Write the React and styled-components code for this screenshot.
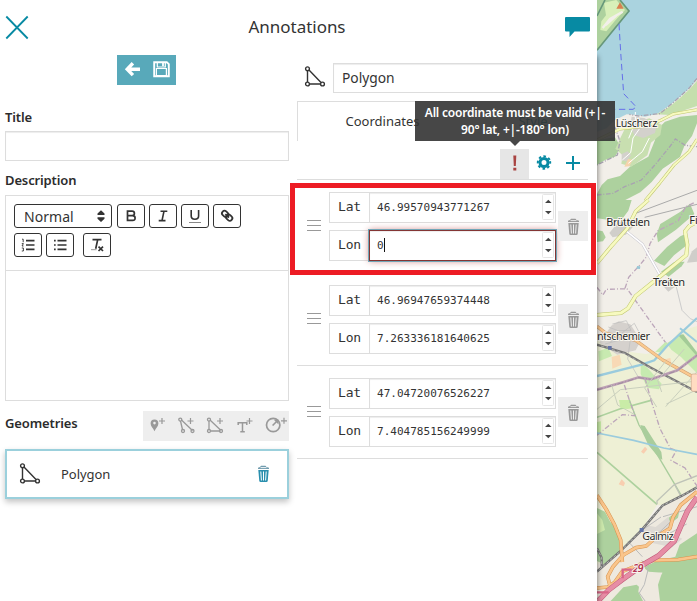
import React from 'react';
import styled, { createGlobalStyle, css } from 'styled-components';

const GlobalStyle = createGlobalStyle`
  *, *::before, *::after { box-sizing: border-box; }
  body { margin: 0; overflow: hidden; background: #fff; color: #333; font-family: "Noto Sans", sans-serif; font-size: 13px; }
  svg { display: block; }
`;

const Page = styled.div`
  display: grid;
  grid-template-columns: 597px 100px;
  width: 697px;
  height: 601px;
  overflow: hidden;
`;
const Panel = styled.main`
  position: relative;
  z-index: 1;
  background: #fff;
  box-shadow: 1px 56px 5px rgba(0, 0, 0, 0.42);
`;
const Header = styled.header`
  display: flex;
  justify-content: space-between;
  height: 55px;
  padding: 15px 6px 0 5px;
`;
const Heading = styled.h1`
  margin: 0;
  font-size: 17px;
  font-weight: 400;
  line-height: 24px;
  letter-spacing: -0.03px;
`;
const Columns = styled.div`
  display: grid;
  grid-template-columns: 284px 291px;
  gap: 8px;
  padding-left: 5px;
`;
const Column = styled.section`
  min-width: 0;
`;
const ActionBar = styled.div`
  display: flex;
  width: 59px;
  height: 30px;
  margin: 0 auto 22px 112px;
  background: #58a9ba;
`;
const FieldLabel = styled.label`
  display: block;
  height: ${(p) => p.$height}px;
  padding-top: ${(p) => p.$offset || 0}px;
  font-size: 13px;
  font-weight: 600;
  line-height: 20px;
  letter-spacing: -0.13px;
  color: #2c2c2c;
`;
const inputBox = css`
  border: 1px solid #ddd;
  box-shadow: inset 0 1px 1px rgba(0, 0, 0, 0.075);
  background: #fff;
`;
const TextBox = styled.div`
  ${inputBox}
  flex: 1;
  height: 30px;
  padding-left: 8px;
  font-size: 13.8px;
  line-height: 28px;
`;
const Editor = styled.div`
  height: 206px;
  border: 1px solid #ddd;
`;
const EditorTools = styled.div`
  display: grid;
  align-content: start;
  gap: 5px;
  height: 75px;
  padding: 8px;
  border-bottom: 1px solid #ddd;
`;
const ToolRow = styled.div`
  display: flex;
  gap: 4px;
`;
const EditorButton = styled.button`
  width: 28px;
  height: 24px;
  padding: 0;
  margin: 0 0 0 ${(p) => (p.$spaced ? 5 : 0)}px;
  border: 1px solid #333;
  border-radius: 3px;
  background: #fff;
  color: #333;
`;
const FormatSelect = styled.div`
  display: flex;
  justify-content: space-between;
  width: 98px;
  height: 24px;
  margin-right: 1px;
  padding: 0 5px 0 9px;
  border: 1px solid #333;
  border-radius: 3px;
  font-size: 14px;
  letter-spacing: 0.05px;
  line-height: 24px;
`;
const GeometryHead = styled.div`
  display: flex;
  justify-content: space-between;
  margin-top: 10px;
`;
const GeometryTools = styled.div`
  display: flex;
  width: 146px;
  height: 30px;
  background: #eee;
`;
const GeometryCard = styled.div`
  display: flex;
  align-items: center;
  height: 50px;
  margin-top: 8px;
  padding: 0 16px 0 12px;
  border: 2px solid #9bd0dc;
  box-shadow: 0 3px 6px rgba(0, 0, 0, 0.24);
`;
const CardName = styled.span`
  flex: 1;
  padding-left: 20px;
  letter-spacing: -0.05px;
`;
const CardTrash = styled.span`
  width: 15px;
  svg { margin: -3px 0 0 -8px; }
`;
const NameRow = styled.div`
  display: flex;
  padding-top: 8px;
`;
const ShapeMark = styled.div`
  width: 36px;
  padding: 3px 0 0 7px;
`;
const Tabs = styled.div`
  display: grid;
  grid-template-columns: 171px 120px;
  height: 40px;
  margin-top: 8px;
  line-height: 39px;
  text-align: center;
`;
const Tab = styled.div`
  color: ${(p) => (p.$active ? '#333' : '#078aa3')};
  border-top: ${(p) => (p.$active ? '1px solid #ddd' : '1px solid transparent')};
  border-left: ${(p) => (p.$active ? '1px solid #ddd' : '0')};
  padding-right: ${(p) => (p.$active ? 1 : 0)}px;
  padding-left: ${(p) => (p.$active ? 0 : 10)}px;
`;
const CoordinateTools = styled.div`
  display: flex;
  justify-content: flex-end;
  height: 39px;
  padding: 8px 1px 0 0;
  border-bottom: 1px solid #ddd;
  color: #078aa3;
`;
const ToolButton = styled.div`
  position: relative;
  width: 29px;
  height: 30px;
  color: ${(p) => (p.$warn ? '#a94442' : 'inherit')};
  background: ${(p) => (p.$warn ? '#e6e6e6' : 'transparent')};
`;
const Tooltip = styled.div`
  position: absolute;
  z-index: 3;
  right: -86px;
  bottom: 38px;
  width: 200px;
  height: 40px;
  padding-top: 3px;
  background: rgba(51, 51, 51, 0.9);
  color: #fff;
  font-size: 12px;
  font-weight: 600;
  line-height: 17px;
  letter-spacing: -0.21px;
  text-align: center;
  white-space: nowrap;
  &::after {
    content: '';
    position: absolute;
    top: 40px;
    left: 95px;
    border: 5px solid transparent;
    border-top-color: rgba(51, 51, 51, 0.9);
    border-bottom: 0;
  }
`;
const CoordinateItem = styled.div`
  position: relative;
  display: grid;
  grid-template-columns: 32px 227px 30px;
  align-items: center;
  height: 93px;
  border-bottom: 1px solid #ddd;
`;
const Pair = styled.div`
  display: grid;
  gap: 8px;
`;
const InputGroup = styled.div`
  display: grid;
  grid-template-columns: 41px 187px;
  width: 227px;
  height: 30px;
`;
const AxisLabel = styled.div`
  border: 1px solid #ddd;
  font: 13px/27px "DejaVu Sans Mono", monospace;
  letter-spacing: -0.2px;
  text-align: center;
`;
const NumberBox = styled.div`
  ${inputBox}
  display: flex;
  justify-content: space-between;
  margin-left: -1px;
  width: 187px;
  padding: 0 0 0 7px;
  font: 11px/29px "DejaVu Sans Mono", monospace;
  letter-spacing: 0.02px;
  ${(p) =>
    p.$invalid &&
    css`
      border-color: #843534;
      outline: 1px solid #72a6b7;
      box-shadow: inset 0 1px 1px rgba(0, 0, 0, 0.07), 0 0 7px #ce8483;
    `}
`;
const Caret = styled.span`
  display: inline-block;
  width: 1px;
  height: 14px;
  vertical-align: -3px;
  background: #111;
`;
const DeleteButton = styled.div`
  width: 30px;
  height: 30px;
  margin-left: 2px;
  background: #eee;
`;
const Highlight = styled.div`
  position: absolute;
  z-index: 2;
  left: -7px;
  top: 3px;
  width: 306px;
  height: 92px;
  border: 5px solid #ed1c24;
`;
const MapArea = styled.aside`
  width: 100px;
  height: 601px;
  overflow: hidden;
`;

const Polygon = ({ size = 22, width = 1.4 }) => (
  <svg width={size} height={size} viewBox="0 0 22 22" fill="none" stroke="#333" strokeWidth={width}>
    <path d="M3.5 4.5V16M5.5 18H16M5 4l12 12.5" />
    <circle cx="3.5" cy="2.8" r="1.9" /><circle cx="3.5" cy="18" r="1.9" /><circle cx="18.5" cy="18" r="1.9" />
  </svg>
);

const Trash = ({ color = '#999', top = '#999', gap = '#eee' }) => (
  <svg width="30" height="30" viewBox="0 0 30 30" fill={color}>
    <path d="M10 11V9.8l2-.8 1-1.2h4.5l1 1.2 2.5.8V11z" fill={top} />
    <path d="M12.5 9.6h6" stroke={gap} strokeWidth=".9" />
    <path d="M10.3 12h10.4l-1 11q-.2 1-1.2 1h-6q-1 0-1.2-1z" />
    <path d="M12.8 13.5l.6 9M15.5 13.5v9M18.2 13.5l-.6 9" stroke={gap} strokeWidth="1" />
  </svg>
);

const Spinner = () => (
  <svg width="13" height="28" viewBox="0 0 13 28">
    <rect x=".5" y="1.5" width="11" height="25" rx="1" fill="#fff" stroke="#e6e6e6" />
    <path d="M3 10l3.3-3.3L9.6 10zM3 18h6.6l-3.3 3.3z" fill="#444" />
  </svg>
);

const EditorIcon = ({ kind }) => (
  <svg width="26" height="22" viewBox="0 0 26 22" fill="none" stroke="#333" strokeWidth="1.7">
    {kind === 'bold' && <path d="M9.5 6.2H14q2.4 0 2.4 2.2T14 10.7H9.5h5q2.6 0 2.6 2.4t-2.6 2.3h-5zM9.5 6v9.5" />}
    {kind === 'italic' && <path d="M10.5 6.2h6.8M8.7 15.6h6.8M14 6.2l-2 9.4" strokeWidth="1.6" />}
    {kind === 'underline' && <><path d="M9.2 5v6q0 3.2 3.7 3.2t3.7-3.2V5" strokeWidth="1.6" /><path d="M7 17.5h12" stroke="#888" strokeWidth="1" /></>}
    {kind === 'link' && <g transform="rotate(43 13 11)" strokeWidth="1.8"><rect x="6.8" y="8.2" width="6.8" height="5" rx="2.5" /><rect x="12.3" y="8.2" width="6.8" height="5" rx="2.5" /><path d="M10.5 10.7h5" /></g>}
    {kind === 'ordered' && <><path d="M11 6.6h8.5M11 11h8.5M11 15.4h8.5" /><path d="M7 5.2h1.2v3M6.8 9.6h1.6L7 12h1.5M6.8 14h1.6v3H6.8" strokeWidth=".9" /></>}
    {kind === 'bullet' && <path d="M7 6.6h1.7M7 11h1.7M7 15.4h1.7M10.5 6.6h9M10.5 11h9M10.5 15.4h9" />}
    {kind === 'clean' && <><path d="M8.5 5.6h9M13.7 5.6l-2 9.2" strokeWidth="1.7" /><path d="M7 15.7h5.5" stroke="#999" strokeWidth="1" /><path d="M14.5 12.7l4.5 4.3m0-4.3L14.5 17" /></>}
  </svg>
);

const Plus = ({ x = 19, y = 10 }) => <path d={`M${x - 3} ${y}h6M${x} ${y - 3}v6`} strokeWidth="1.2" />;
const GeometryIcon = ({ kind }) => (
  <svg width="29.2" height="30" viewBox="0 0 29.2 30" fill="none" stroke="#999" strokeWidth="1.3">
    {kind === 'marker' && <><path fillRule="evenodd" d="M11.5 8.5a3.9 3.9 0 0 0-3.9 3.9c0 2.7 2.5 4.4 3.9 7.8 1.4-3.4 3.9-5.1 3.9-7.8a3.9 3.9 0 0 0-3.9-3.9zm0 2.3a1.3 1.3 0 1 1 0 2.6 1.3 1.3 0 0 1 0-2.6z" fill="#999" stroke="none" /><Plus /></>}
    {kind === 'line' && <><path d="M8.5 10l2 8.5M9.5 9l11 10.5" /><circle cx="8.3" cy="8.6" r="1.5" /><circle cx="11" cy="20" r="1.5" /><circle cx="20.5" cy="20" r="1.5" /><Plus x={18.5} /></>}
    {kind === 'polygon' && <><path d="M8 10v9M9.5 20h10M9 9l10.5 10" /><circle cx="8" cy="8.6" r="1.5" /><circle cx="8" cy="20" r="1.5" /><circle cx="20" cy="20" r="1.5" /><Plus x={19} /></>}
    {kind === 'text' && <><path d="M7.2 14v-2.2h8.6V14M11.5 12v8.5M9.3 20.7h4.5" strokeWidth="1.5" /><Plus x={18.5} /></>}
    {kind === 'circle' && <><circle cx="13.2" cy="14" r="6.7" strokeWidth="1.7" /><path d="M12.6 14.5l5-5" strokeWidth="1.6" /><path d="M13.8 8.7h4.7v4.7z" fill="#999" stroke="none" /><Plus x={24} y={9.8} /></>}
  </svg>
);

const EditorPanel = () => (
  <Column>
    <ActionBar>
      <svg width="59" height="30" viewBox="0 0 59 30" fill="none" stroke="#fff">
        <path d="M15.9 8.3L10.2 14.2l5.7 5.9M10.5 14.2H23" strokeWidth="3.4" />
        <path d="M37.2 7.2h12.6l2 2v12.1H37.2z" strokeWidth="1.9" />
        <path d="M39.4 13.5h10v7h-10zM40.3 7v5h8V7" strokeWidth="1.2" />
        <path d="M46 8v3.2" strokeWidth="1.8" />
      </svg>
    </ActionBar>
    <FieldLabel $height={24}>Title</FieldLabel>
    <TextBox />
    <FieldLabel $height={34} $offset={9}>Description</FieldLabel>
    <Editor>
      <EditorTools>
        <ToolRow>
          <FormatSelect>Normal
            <svg width="10" height="22" viewBox="0 0 10 22"><path d="M1.5 10V8.5L5 5.2l3.5 3.3V10zM1.5 12.3v1.5L5 17l3.5-3.2v-1.5z" fill="#333" /></svg>
          </FormatSelect>
          {['bold', 'italic', 'underline', 'link'].map((kind) => <EditorButton key={kind} aria-label={kind}><EditorIcon kind={kind} /></EditorButton>)}
        </ToolRow>
        <ToolRow>
          <EditorButton><EditorIcon kind="ordered" /></EditorButton>
          <EditorButton><EditorIcon kind="bullet" /></EditorButton>
          <EditorButton $spaced><EditorIcon kind="clean" /></EditorButton>
        </ToolRow>
      </EditorTools>
    </Editor>
    <GeometryHead>
      <FieldLabel $height={24} $offset={2}>Geometries</FieldLabel>
      <GeometryTools>
        {['marker', 'line', 'polygon', 'text', 'circle'].map((kind) => <GeometryIcon key={kind} kind={kind} />)}
      </GeometryTools>
    </GeometryHead>
    <GeometryCard>
      <Polygon />
      <CardName>Polygon</CardName>
      <CardTrash><Trash color="#2a8fae" top="#719cae" gap="#fff" /></CardTrash>
    </GeometryCard>
  </Column>
);

const points = [
  ['46.99570943771267', '0'],
  ['46.96947659374448', '7.263336181640625'],
  ['47.04720076526227', '7.404785156249999'],
];

const Coordinate = ({ axis, value, invalid }) => (
  <InputGroup>
    <AxisLabel>{axis}</AxisLabel>
    <NumberBox $invalid={invalid}><span>{value}{invalid && <Caret />}</span><Spinner /></NumberBox>
  </InputGroup>
);

const CoordinatePanel = () => (
  <Column>
    <NameRow><ShapeMark><Polygon /></ShapeMark><TextBox>Polygon</TextBox></NameRow>
    <Tabs><Tab $active>Coordinates</Tab><Tab>Style</Tab></Tabs>
    <CoordinateTools>
      <ToolButton $warn>
        <svg width="29" height="30" viewBox="0 0 29 30" fill="currentColor"><path d="M13.3 6.5h3l-.5 10.5h-2zM13.3 18.7h3v2.8h-3z" /></svg>
        <Tooltip>All coordinate must be valid (+|-<br />90° lat, +|-180° lon)</Tooltip>
      </ToolButton>
      <ToolButton>
        <svg width="29" height="30" viewBox="0 0 29 30" fill="none" stroke="currentColor">
          <circle cx="15" cy="13.5" r="4" strokeWidth="3" />
          <circle cx="15" cy="13.5" r="6.2" strokeWidth="2" strokeDasharray="2.5 2.37" transform="rotate(-12 15 13.5)" />
        </svg>
      </ToolButton>
      <ToolButton><svg width="29" height="30" viewBox="0 0 29 30" stroke="currentColor" strokeWidth="2"><path d="M8 14h14M15 7v14" /></svg></ToolButton>
    </CoordinateTools>
    {points.map(([lat, lon], index) => (
      <CoordinateItem key={lat}>
        {index === 0 && <Highlight />}
        <svg width="32" height="12" viewBox="0 0 32 12"><path d="M10 .5h14M10 5.5h14M10 10.5h14" stroke="#999" /></svg>
        <Pair><Coordinate axis="Lat" value={lat} /><Coordinate axis="Lon" value={lon} invalid={index === 0} /></Pair>
        <DeleteButton><Trash /></DeleteButton>
      </CoordinateItem>
    ))}
  </Column>
);

const Road = ({ d, color = '#f7fabf', edge = '#bfc56f', width = 9 }) => (
  <g fill="none" strokeLinejoin="round"><path d={d} stroke={edge} strokeWidth={width} /><path d={d} stroke={color} strokeWidth={width - 3} /></g>
);

const TerrainMap = () => (
  <svg width="100" height="601" viewBox="21 0 300 1803" preserveAspectRatio="none">
    <rect x="21" width="300" height="1803" fill="#f2efe9" />
    <path d="M21 0H321V238L301 262 270 290 240 315 205 340 165 350 140 345 110 343 75 360 50 385 21 395z" fill="#aad3df" />
    <path d="M21 0H92L117 33 60 103 21 151z" fill="#add19e" />
    <path d="M42 8L79 0 105 30 75 62 49 94 31 90 34 64 48 46z" fill="#d8efb9" />
    <path d="M38 84L60 57 98 35M47 75L79 47" fill="none" stroke="#f2efe9" strokeWidth="7" />
    <path d="M90 0l27 33-57 70-39 48M21 48L45 0" fill="none" stroke="#66977a" strokeWidth="5" />
    <path d="M79 26l11-19 11 19zM205 470l11-20 12 20z" fill="#d98050" />
    <path d="M321 242L300 266 270 294 240 319 200 343 240 345 321 318z" fill="#c5dfad" />
    <path d="M321 345L270 350 225 365 200 390 195 420 175 470 120 500 90 528 53 538 35 555 21 581V600H106L151 577 185 546 218 506 270 471 283 438 306 408 321 370z" fill="#add19e" />
    <path d="M21 420L75 412 92 440 75 470 45 480 21 495z" fill="#add19e" />
    <path d="M21 600H125L115 632 96 658 65 661 21 655zM21 690l17 4 9 18-8 12-18 2z" fill="#add19e" />
    <path d="M110 375l68-20 38 20-5 30-28 23-11 38-48 34-30-9 4-25-22-20 14-30z" fill="#c8dfb0" />
    <path d="M125 350l38 4 37 22-5 23-35 15-27-8-13-28zM95 462l18-8 10 12-14 18-14-3z" fill="#d3d1cc" />
    <path d="M103 500l11-23 14 2-10 20z" fill="#f6d3ad" />
    <g fill="none" stroke="#fff" strokeWidth="3"><path d="M97 480l25-22 7-44 19-27M115 490l42-35 21-41M136 336v30l-20 49" /></g>
    <g fill="none" stroke="#a8a3b0" strokeWidth="4" strokeDasharray="14 5 3 5"><path d="M21 585l48-5 35-20 50-20 44-49 43-53 15-21 30 19 35 4M75 380l15 44-8 41-61 30M321 235l-24 30-42 38-45 38-65 7-27-5" /></g>
    <path d="M87 72l6 99 8 110 38 40-10 7-54 0" fill="none" stroke="#656ee9" strokeWidth="3" strokeDasharray="19 11" />
    <Road d="M321 329L250 342 212 361 170 378 90 387 21 420" />
    <Road d="M321 418L297 455 252 495 210 548 165 602" />

    <path d="M200 702l11-30 59-36 30-25 13 31-55 47-54 38zM192 782l39-41 40-32 15-7 4 34-38 30-29 32z" fill="#add19e" />
    <path d="M213 815l40-29 31-1-9 14-39 31z" fill="#add19e" />
    <path d="M58 699l24-29 27-12 28 14-30 32-39 8zM222 861l20-9 12 9-19 14z" fill="#d0ceca" />
    <path d="M321 742l-15 12-15 34 30-3z" fill="#d0ceca" />
    <path d="M129 643l192-72M164 652l157-39" fill="none" stroke="#aaa" strokeWidth="3" />
    <g fill="none" stroke="#bca6ba" strokeWidth="4" strokeDasharray="15 6 3 6"><path d="M21 862l18 23 10-17 62-2 123 172M105 865l11-33 37-41 16-20 11-40 24-39 61-30 22-42 26-12" /></g>
    <Road d="M111 695l47 38 17 30 38 67" color="#fff" edge="#c8c6cf" width="8" />
    <path d="M259 861l17 70 25 25 20 9" fill="none" stroke="#ccc" strokeWidth="3" />
    <Road d="M175 600L137 634 112 685 62 741 21 790" width="11" />
    <Road d="M321 665L298 678 285 694 292 734 289 765 217 824 137 888 114 925 93 939 21 945" width="12" />
    <path d="M141 798l10 1-1 8-10-1z" fill="#99c7d6" />

    <path d="M21 1020l41 8 29 24 78 10 60-18 39-50 53-16V1520L201 1515 137 1620 21 1710z" fill="#eef0d5" />
    <path d="M230 1030l40-25 51 60v55l-48-49-29-22zM25 1054l30-11 11 25-39 16z" fill="#c8eab0" />
    <path d="M65 1071l24-7 6 30-28 12zM225 1078l16-4 3 17-15 1z" fill="#f8d9b5" />
    <path d="M64 977l22-13 35 9 31 48-15 30-55 13-54-36z" fill="#d5d1cd" />
    <path d="M67 972l42-10 14 29-39 1-29-11M59 1028l74-58 16 30-87 14M45 1032l77-20-9 65 34 58" stroke="#bbb" strokeWidth="2" fill="none" />
    <path d="M152 1089l20 14 43 48-8 17-35-5-20-41zM196 1055l31-30 9 12-27 20z" fill="#c6eab0" />
    <path d="M264 1005l16-2 41 54v12z" fill="#a3cb97" />
    <path d="M21 1128l134-34 38-13 38-43 90-84" stroke="#9acbdd" strokeWidth="7" fill="none" />
    <path d="M270 985l51 41" stroke="#9acbdd" strokeWidth="6" fill="none" />
    <Road d="M21 979l27 21 89 21 81 59 103 57" color="#fac98e" edge="#ce9f75" width="10" />
    <path d="M21 1034l84 25 75 43 141 74" stroke="#777" strokeWidth="7" fill="none" />
    <path d="M33 1038l70 22 75 42 139 73" stroke="#c6c6c6" strokeWidth="2" strokeDasharray="10 7" fill="none" />
    <rect x="54" y="1038" width="11" height="11" fill="#6473a5" />
    <path d="M21 1169l80-23 45-14 37 6 79-27 59-45" stroke="#bda0b5" strokeWidth="8" fill="none" />
    <path d="M21 1170l80-23 46-14 37 5 78-26 59-46" stroke="#8d7e92" strokeWidth="2" fill="none" strokeDasharray="18 6 3 5" />
    <g fill="none" stroke="#c9cfbd" strokeWidth="3"><path d="M21 1228l70-59 230-26M65 1155l18 60 53 30M226 1085l-62 79 36 57M283 1047l-80 94 12 35M321 1115l-94 105M321 1169l-92 43" /></g>
    <rect x="304" y="1122" width="32" height="52" rx="5" fill="#ffdcc2" stroke="#d1a98d" strokeWidth="2" />

    <path d="M21 1252l68-25 94-26M21 1357l180 156" stroke="#add19e" strokeWidth="5" fill="none" />
    <path d="M87 1200h33l8 25-17 2-20-4zM21 1266l12-2v31l-12 10z" fill="#c9eca7" />
    <path d="M151 1275l13 3 30 47 20 31 3 23-9-4-33-40-17-37z" fill="#a9cd9c" />
    <path d="M118 1200l16 42 13 33 60 98 65 110" stroke="#a9cd9c" strokeWidth="4" fill="none" />
    <g fill="none" stroke="#bca6ba" strokeWidth="4" strokeDasharray="16 6 3 6"><path d="M21 1306l76-62 38 3-17-47M183 1200l27 86 31 59 18 6-16 30 42 23 36 54M103 1155l15 45M165 1135l18 65" /></g>
    <path d="M21 1299l110 22 90 23 100 19" stroke="#9acbdd" strokeWidth="5" fill="none" />
    <path d="M153 1355l12-15 7 8-11 13zM86 1453l9-15 10 11-4 10z" fill="#f8ceb0" />
    <path d="M201 1513v-10l53-50 67-26M254 1453l18 35" fill="none" stroke="#bfc3b8" strokeWidth="4" />

    <path d="M321 1460l-90 49-73 80-70 63-67 42v109h300z" fill="#eee9df" />
    <path d="M21 1524l24 11 16 31 25 24 4 70-49 33-20-10zM248 1544l20-10-4 19-23 18-6-17z" fill="#add19e" />
    <path d="M21 1540l16 20 8 30-24 12z" fill="#cce8ac" />
    <path d="M321 1600l-52 34-13 36-55 13-38 17 6 21 47-3-12 36 6 49h111z" fill="#acd19d" />
    <path d="M100 1762l40-8 22 20 8 29H62z" fill="#acd19d" />
    <path d="M158 1700l18 15 42 3-13 16-17 34 13 35h-42l-14-28 5-38-32 5z" fill="#eee9df" />
    <path d="M166 1575l31 6 38-31 6 22-17 34 29-1 24 11-31 26-59-13-31-22z" fill="#ddd9d3" />
    <g fill="none" stroke="#bbb" strokeWidth="3"><path d="M114 1624l43 46M137 1604l76-53M205 1600l37-35M219 1550l102-30M230 1605l60-33M155 1681l20 25-12 48-15 25 18 25" /></g>
    <path d="M321 1462l-45 25-58 29-64 75-62 62-71 62M21 1645l14 28v30" stroke="#737373" strokeWidth="7" fill="none" />
    <path d="M321 1462l-45 25-58 29-64 75-62 62-71 62M21 1645l14 28v30" stroke="#d6d6d6" strokeWidth="2" strokeDasharray="9 5" fill="none" />
    <Road d="M21 1486l27 41 25 46 19 47 5 66M321 1475l-49 40-23 37-9 33-42 26-29 27-31 5-38 22-31 35-16 30 6 24M21 1764l33-3 20-14 22-32 46-19 48-15 75-2 60-10" color="#fac58b" edge="#d7934e" width="11" />
    <Road d="M321 1492l-28 40-20 45-20 46-47 44-45 26-67 48-38 29-35 36" color="#e68da5" edge="#bf5877" width="16" />
    <path d="M21 1777h35M98 1735v-26h27" fill="none" stroke="#d96688" strokeWidth="7" />
    <rect x="149" y="1584" width="12" height="12" fill="#6475a8" />
    <g fontFamily="Noto Sans" fontSize="33" fill="#292929" stroke="#f7f5ee" strokeWidth="6" paintOrder="stroke">
      <text x="77" y="382" textLength="125">Lüscherz</text><text x="49" y="677" textLength="131">Brüttelen</text>
      <text x="298" y="672">Fi</text><text x="189" y="857" textLength="96">Treiten</text>
      <text x="21" y="1020" textLength="159">ntschemier</text><text x="157" y="1619" textLength="94">Galmiz</text>
      <text x="129" y="1716" fill="#b33655" fontStyle="italic" fontWeight="600" textLength="32">29</text>
    </g>
  </svg>
);

export default function App() {
  return (
    <>
      <GlobalStyle />
      <Page>
        <Panel>
          <Header>
            <svg width="24" height="26" viewBox="0 0 24 26" stroke="#078aa3" strokeWidth="1.8"><path d="M1.3 1.5l21.4 22M22.7 1.5l-21.4 22" /></svg>
            <Heading>Annotations</Heading>
            <svg width="26" height="24" viewBox="0 0 26 24" fill="#078aa3"><path d="M1 2h23q1 0 1 1v12.5q0 1-1 1H9.5L4.5 22v-5.5H1q-1 0-1-1V3q0-1 1-1z" /></svg>
          </Header>
          <Columns><EditorPanel /><CoordinatePanel /></Columns>
        </Panel>
        <MapArea><TerrainMap /></MapArea>
      </Page>
    </>
  );
}
